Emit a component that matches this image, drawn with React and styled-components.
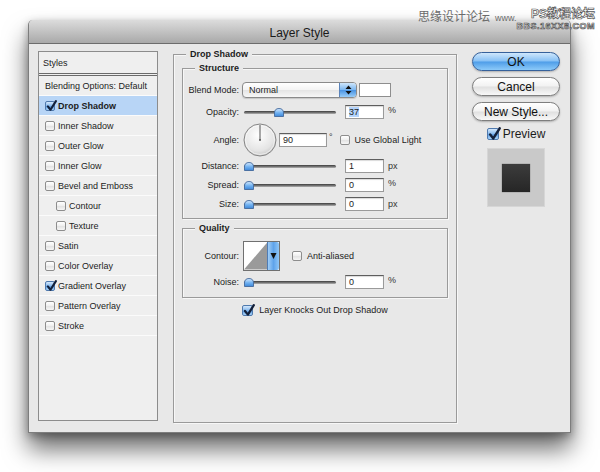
import React from "react";
import styled, { createGlobalStyle } from "styled-components";

const GlobalStyle = createGlobalStyle`
  html, body { margin: 0; padding: 0; background: #fff; }
  body { font-family: "Liberation Sans", Arial, sans-serif; color: #1c1c1c; }
`;

const Page = styled.div`
  position: relative;
  width: 600px;
  height: 472px;
  overflow: hidden;
  box-sizing: border-box;
  padding: 20px 0 0 28px;
`;

const Watermark = styled.div`
  position: absolute;
  top: 7px;
  right: 5px;
  display: flex;
  align-items: flex-start;
  font-family: "Liberation Sans", "Noto Sans CJK SC", sans-serif;
`;

const WmText = styled.span`
  font-size: 12px;
  line-height: 14px;
  color: #6b6b6b;
  margin-top: 3px;
  white-space: nowrap;
  span { font-size: 9px; margin-left: 5px; }
`;

const WmStack = styled.div`
  display: flex;
  flex-direction: column;
  align-items: flex-end;
`;

const WmOutline = styled.span`
  display: block;
  font-size: ${(p) => p.$size}px;
  line-height: ${(p) => p.$lh}px;
  font-weight: bold;
  color: #fff;
  -webkit-text-stroke: 0.7px #555;
  letter-spacing: ${(p) => p.$ls || 0}px;
  white-space: nowrap;
`;

const Window = styled.div`
  width: 543px;
  height: 413px;
  box-sizing: border-box;
  background: #e8e8e8;
  border: 1px solid #7d7d7d;
  border-top: none;
  border-radius: 5px 5px 0 0;
  box-shadow: 0 16px 24px rgba(0, 0, 0, 0.58), 0 3px 9px rgba(0, 0, 0, 0.3);
  display: flex;
  flex-direction: column;
`;

const TitleBar = styled.div`
  height: 24px;
  box-sizing: border-box;
  padding-top: 2px;
  background: linear-gradient(#dcdcdc, #bdbdbd 60%, #a9a9a9);
  border-bottom: 1px solid #6c6c6c;
  border-radius: 5px 5px 0 0;
  display: flex;
  align-items: center;
  justify-content: center;
  font-size: 12px;
  color: #1a1a1a;
`;

const Body = styled.div`
  display: flex;
  align-items: flex-start;
  padding: 7px 0 0 9px;
`;

/* ---------- styles list ---------- */

const StylesList = styled.div`
  width: 120px;
  height: 370px;
  box-sizing: border-box;
  border: 1px solid #8c8c8c;
  background: #efefef;
  font-size: 9px;
`;

const ListHeader = styled.div`
  height: 24px;
  box-sizing: border-box;
  border-bottom: 3px double #6a6a6a;
  padding-left: 4px;
  display: flex;
  align-items: center;
`;

const ListRow = styled.div`
  height: 20px;
  box-sizing: border-box;
  border-bottom: 1px solid #fbfbfb;
  padding-left: ${(p) => (p.$indent ? 17 : 6)}px;
  display: flex;
  align-items: center;
  gap: 3px;
  background: ${(p) => (p.$active ? "#b8d5f6" : "transparent")};
  font-weight: ${(p) => (p.$active ? "bold" : "normal")};
  white-space: nowrap;
`;

/* ---------- checkbox ---------- */

const Box = styled.span`
  position: relative;
  flex-shrink: 0;
  width: ${(p) => p.$size}px;
  height: ${(p) => p.$size}px;
  box-sizing: border-box;
  border: 1px solid ${(p) => (p.$checked ? "#4f79ad" : "#8d8d8d")};
  border-radius: 2px;
  background: ${(p) =>
    p.$checked
      ? "linear-gradient(#d4e8fc, #84b8ee 50%, #5c9ce3 51%, #a9d3f8)"
      : "linear-gradient(#ffffff, #eeeeee 50%, #e2e2e2 51%, #f6f6f6)"};
  svg { position: absolute; left: 0; top: -2px; }
`;

function Checkbox({ checked, size = 10 }) {
  return (
    <Box $size={size} $checked={checked}>
      {checked && (
        <svg width={size + 1} height={size + 2} viewBox="0 0 12 13">
          <path d="M2 7 L4.9 10.6 L10.8 1.2" fill="none" stroke="#13203a" strokeWidth="2.3" strokeLinecap="round" strokeLinejoin="round" />
        </svg>
      )}
    </Box>
  );
}

/* ---------- main panel ---------- */

const Main = styled.div`
  margin: 3px 0 0 15px;
`;

const Group = styled.div`
  position: relative;
  box-sizing: border-box;
  width: ${(p) => (p.$w ? `${p.$w}px` : "auto")};
  height: ${(p) => p.$h}px;
  margin-top: ${(p) => p.$mt || 0}px;
  border: 1px solid #9a9a9a;
  box-shadow: inset 1px 1px 0 #f7f7f7, 1px 1px 0 #f7f7f7;
  padding: ${(p) => p.$pad};
`;

const GroupTitle = styled.span`
  position: absolute;
  top: -7px;
  left: 12px;
  padding: 0 4px;
  background: #e8e8e8;
  font-size: 9px;
  font-weight: bold;
  line-height: 12px;
`;

const Row = styled.div`
  display: flex;
  align-items: center;
  height: ${(p) => p.$h || 14}px;
  margin-top: ${(p) => p.$mt || 0}px;
  font-size: 9px;
  justify-content: ${(p) => (p.$center ? "center" : "flex-start")};
`;

const Label = styled.span`
  width: 56px;
  flex-shrink: 0;
  text-align: right;
  white-space: nowrap;
`;

const Select = styled.div`
  margin-left: 3px;
  width: 115px;
  height: 16px;
  box-sizing: border-box;
  border: 1px solid #8a8a8a;
  border-radius: 4px;
  background: linear-gradient(#ffffff, #f3f3f3 50%, #e4e4e4 51%, #f7f7f7);
  box-shadow: 0 1px 1px rgba(0, 0, 0, 0.15);
  display: flex;
  align-items: center;
  justify-content: space-between;
  padding-left: 6px;
  overflow: hidden;
`;

const Stepper = styled.div`
  width: 16px;
  align-self: stretch;
  border-left: 1px solid #5a83ba;
  background: linear-gradient(#cfe6fb, #78b5f0 50%, #4892e3 51%, #99cdf8);
  display: flex;
  align-items: center;
  justify-content: center;
`;

const Swatch = styled.div`
  margin-left: 2px;
  width: 32px;
  height: 14px;
  box-sizing: border-box;
  border: 1px solid #8e8e8e;
  background: #fff;
`;

const SliderWrap = styled.div`
  position: relative;
  margin-left: 5px;
  width: 92px;
  height: 14px;
  display: flex;
  align-items: center;
`;

const Track = styled.div`
  flex: 1;
  height: 3px;
  border-radius: 2px;
  background: linear-gradient(#3c3c3c, #7b7b7b 60%, #b5b5b5);
`;

const Thumb = styled.svg`
  position: absolute;
  top: 3px;
`;

function Slider({ value }) {
  return (
    <SliderWrap>
      <Track />
      <Thumb width="10" height="9" viewBox="0 0 10 9" style={{ left: Math.round(value * 82) }}>
        <defs>
          <linearGradient id="th" x1="0" y1="0" x2="0" y2="1">
            <stop offset="0" stopColor="#d8ecff" />
            <stop offset="0.55" stopColor="#6fb0f0" />
            <stop offset="1" stopColor="#3d86d8" />
          </linearGradient>
        </defs>
        <path d="M0.5 8.5 V5 Q0.5 0.6 5 0.5 Q9.5 0.6 9.5 5 V8.5 Z" fill="url(#th)" stroke="#43699c" strokeWidth="0.9" />
      </Thumb>
    </SliderWrap>
  );
}

const Field = styled.div`
  margin-left: ${(p) => p.$ml}px;
  width: ${(p) => p.$w}px;
  height: 14px;
  box-sizing: border-box;
  border: 1px solid #9a9a9a;
  border-top-color: #5e5e5e;
  background: #fff;
  box-shadow: inset 0 1px 1px rgba(0, 0, 0, 0.15);
  padding-left: 3px;
  font-size: 9px;
  line-height: 12px;
  flex-shrink: 0;
`;

const Selected = styled.span`
  background: #b3d3fb;
`;

const Unit = styled.span`
  margin-left: ${(p) => p.$ml || 4}px;
  margin-bottom: ${(p) => p.$raise || 0}px;
  color: #333;
`;

const CheckLabel = styled.span`
  margin-left: ${(p) => p.$ml || 5}px;
  white-space: nowrap;
`;

const ContourBox = styled.div`
  margin-left: 4px;
  width: 37px;
  height: 30px;
  box-sizing: border-box;
  border: 1px solid #707070;
  display: flex;
  background: #fff;
`;

const ContourArrow = styled.div`
  width: 11px;
  border-left: 1px solid #4f7cb5;
  border-radius: 0 2px 2px 0;
  background: linear-gradient(90deg, #9fcdf7, #5fa3ea 50%, #8fc6f7);
  display: flex;
  align-items: center;
  justify-content: center;
`;

/* ---------- right column ---------- */

const Side = styled.div`
  margin: 1px 0 0 15px;
  width: 88px;
  display: flex;
  flex-direction: column;
  align-items: center;
`;

const Button = styled.div`
  width: 88px;
  height: 19px;
  margin-top: ${(p) => p.$mt || 0}px;
  box-sizing: border-box;
  border-radius: 10px;
  border: 1px solid ${(p) => (p.$primary ? "#36619b" : "#7e7e7e")};
  background: ${(p) =>
    p.$primary
      ? "linear-gradient(#cfe7fc, #86c0f5 48%, #4e9de8 52%, #8ccaf9)"
      : "linear-gradient(#ffffff, #f2f2f2 48%, #e0e0e0 52%, #f8f8f8)"};
  box-shadow: 0 1px 2px rgba(0, 0, 0, 0.25);
  display: flex;
  align-items: center;
  justify-content: center;
  font-size: 12px;
  color: #111;
`;

const PreviewRow = styled.div`
  margin-top: 7px;
  height: 12px;
  display: flex;
  align-items: center;
  font-size: 12px;
`;

const PreviewBox = styled.div`
  margin-top: 8px;
  width: 58px;
  height: 59px;
  box-sizing: border-box;
  border: 1px solid #d6d6d6;
  background: #c9c9c9;
  display: flex;
  align-items: center;
  justify-content: center;
`;

const PreviewSquare = styled.div`
  width: 28px;
  height: 28px;
  background: linear-gradient(#3c3c3c, #262626);
  box-shadow: 0 0 1px #555;
`;

const styleRows = [
  { name: "Drop Shadow", checked: true, active: true },
  { name: "Inner Shadow" },
  { name: "Outer Glow" },
  { name: "Inner Glow" },
  { name: "Bevel and Emboss" },
  { name: "Contour", indent: true },
  { name: "Texture", indent: true },
  { name: "Satin" },
  { name: "Color Overlay" },
  { name: "Gradient Overlay", checked: true },
  { name: "Pattern Overlay" },
  { name: "Stroke" },
];

export default function App() {
  return (
    <Page>
      <GlobalStyle />
      <Watermark>
        <WmText>
          思缘设计论坛<span>www.</span>
        </WmText>
        <WmStack>
          <WmOutline $size={12} $lh={14}>PS教程论坛</WmOutline>
          <WmOutline $size={9} $lh={10} $ls={0.5}>BBS.16XX8.COM</WmOutline>
        </WmStack>
      </Watermark>

      <Window>
        <TitleBar>Layer Style</TitleBar>
        <Body>
          <StylesList>
            <ListHeader>Styles</ListHeader>
            <ListRow>Blending Options: Default</ListRow>
            {styleRows.map((r) => (
              <ListRow key={r.name} $active={r.active} $indent={r.indent}>
                <Checkbox checked={r.checked} />
                {r.name}
              </ListRow>
            ))}
          </StylesList>

          <Main>
            <Group $w={284} $h={369} $pad="13px 8px 0 8px">
              <GroupTitle>Drop Shadow</GroupTitle>

              <Group $h={151} $pad="13px 0 0 0">
                <GroupTitle>Structure</GroupTitle>
                <Row $h={16}>
                  <Label>Blend Mode:</Label>
                  <Select>
                    Normal
                    <Stepper>
                      <svg width="7" height="10" viewBox="0 0 7 10">
                        <path d="M3.5 0.5 L6.5 4 H0.5 Z M3.5 9.5 L6.5 6 H0.5 Z" fill="#111" />
                      </svg>
                    </Stepper>
                  </Select>
                  <Swatch />
                </Row>
                <Row $mt={7}>
                  <Label>Opacity:</Label>
                  <Slider value={0.37} />
                  <Field $ml={9} $w={39}>
                    <Selected>37</Selected>
                  </Field>
                  <Unit $raise={4}>%</Unit>
                </Row>
                <Row $h={34} $mt={4}>
                  <Label>Angle:</Label>
                  <svg width="34" height="34" viewBox="0 0 34 34" style={{ marginLeft: 4, flexShrink: 0 }}>
                    <defs>
                      <radialGradient id="dial" cx="0.45" cy="0.35" r="0.7">
                        <stop offset="0" stopColor="#ffffff" />
                        <stop offset="0.7" stopColor="#e4e4e4" />
                        <stop offset="1" stopColor="#c0c0c0" />
                      </radialGradient>
                    </defs>
                    <circle cx="17" cy="17" r="16" fill="url(#dial)" stroke="#858585" strokeWidth="1" />
                    <circle cx="17" cy="17" r="14.5" fill="none" stroke="#ffffff" strokeWidth="0.8" opacity="0.7" />
                    <line x1="17" y1="17" x2="17" y2="2" stroke="#555" strokeWidth="1" />
                    <circle cx="17" cy="17" r="1" fill="#555" />
                  </svg>
                  <Field $ml={2} $w={48}>90</Field>
                  <Unit $ml={2} $raise={6}>°</Unit>
                  <span style={{ marginLeft: 7, display: "flex" }}>
                    <Checkbox />
                  </span>
                  <CheckLabel>Use Global Light</CheckLabel>
                </Row>
                <Row $mt={2}>
                  <Label>Distance:</Label>
                  <Slider value={0} />
                  <Field $ml={9} $w={39}>1</Field>
                  <Unit>px</Unit>
                </Row>
                <Row $mt={5}>
                  <Label>Spread:</Label>
                  <Slider value={0} />
                  <Field $ml={9} $w={39}>0</Field>
                  <Unit $raise={4}>%</Unit>
                </Row>
                <Row $mt={5}>
                  <Label>Size:</Label>
                  <Slider value={0} />
                  <Field $ml={9} $w={39}>0</Field>
                  <Unit>px</Unit>
                </Row>
              </Group>

              <Group $h={70} $mt={9} $pad="12px 0 0 0">
                <GroupTitle>Quality</GroupTitle>
                <Row $h={30}>
                  <Label>Contour:</Label>
                  <ContourBox>
                    <svg width="24" height="28" viewBox="0 0 24 28" style={{ display: "block" }}>
                      <rect width="24" height="28" fill="#fff" />
                      <polygon points="0,28 24,0 24,28" fill="#9a9a9a" />
                    </svg>
                    <ContourArrow>
                      <svg width="7" height="8" viewBox="0 0 7 8">
                        <path d="M0.5 1 H6.5 L3.5 7 Z" fill="#111" />
                      </svg>
                    </ContourArrow>
                  </ContourBox>
                  <span style={{ marginLeft: 12, display: "flex" }}>
                    <Checkbox />
                  </span>
                  <CheckLabel>Anti-aliased</CheckLabel>
                </Row>
                <Row $mt={4}>
                  <Label>Noise:</Label>
                  <Slider value={0} />
                  <Field $ml={9} $w={39}>0</Field>
                  <Unit $raise={4}>%</Unit>
                </Row>
              </Group>

              <Row $h={12} $mt={6} $center>
                <Checkbox checked size={11} />
                <CheckLabel $ml={6}>Layer Knocks Out Drop Shadow</CheckLabel>
              </Row>
            </Group>
          </Main>

          <Side>
            <Button $primary>OK</Button>
            <Button $mt={6}>Cancel</Button>
            <Button $mt={6}>New Style...</Button>
            <PreviewRow>
              <Checkbox checked size={12} />
              <CheckLabel $ml={4}>Preview</CheckLabel>
            </PreviewRow>
            <PreviewBox>
              <PreviewSquare />
            </PreviewBox>
          </Side>
        </Body>
      </Window>
    </Page>
  );
}
